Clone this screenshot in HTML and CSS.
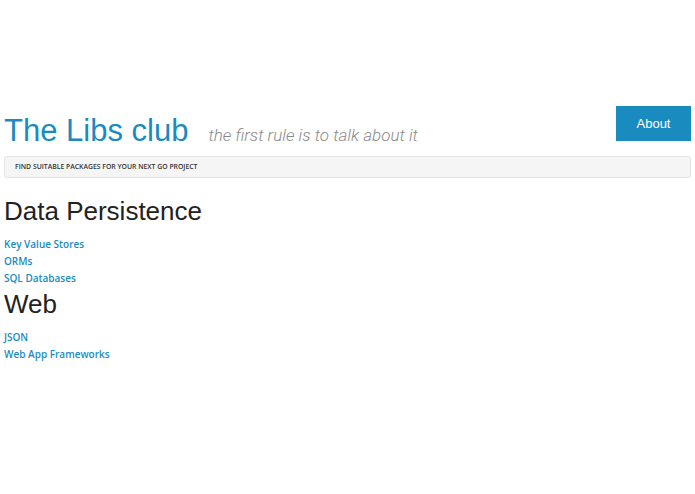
FILE: index.html
```html
<!DOCTYPE html>
<html>
<head>
<meta charset="utf-8">
<link rel="stylesheet" href="styles.css">
</head>
<body>
<div class="page">
  <header class="header">
    <div class="brand">
      <h1 class="title">The Libs club</h1>
      <span class="tagline">the first rule is to talk about it</span>
    </div>
    <a class="about" href="#">About</a>
  </header>
  <div class="bar">FIND SUITABLE PACKAGES FOR YOUR NEXT GO PROJECT</div>
  <section class="group">
    <h2 class="heading">Data Persistence</h2>
    <ul class="links">
      <li><a href="#">Key Value Stores</a></li>
      <li><a href="#">ORMs</a></li>
      <li><a href="#">SQL Databases</a></li>
    </ul>
  </section>
  <section class="group second">
    <h2 class="heading">Web</h2>
    <ul class="links">
      <li><a href="#">JSON</a></li>
      <li><a href="#">Web App Frameworks</a></li>
    </ul>
  </section>
</div>
</body>
</html>
```
FILE: styles.css
```css
html, body { margin: 0; padding: 0; background: #fff; }
body { font-family: "Liberation Sans", Arial, sans-serif; color: #222; }
.page { padding: 106px 4px 0 4px; }
.header { display: flex; justify-content: space-between; align-items: flex-start; }
.brand { display: flex; align-items: baseline; padding-top: 7px; }
.title { margin: 0; font-weight: normal; font-size: 31px; line-height: 36px; color: #1a8bbf; }
.tagline { margin-left: 20px; font-family: Roboto, sans-serif; font-size: 17px; font-style: italic; color: #8a8a8a; font-weight: 300; }
.about { display: block; width: 75px; height: 35px; line-height: 35px; text-align: center; background: #1a8bbf; color: #fff; text-decoration: none; font-size: 13px; }
.bar { margin-top: 7px; height: 20px; line-height: 20px; padding: 0 10px; background: #f5f5f5; border: 1px solid #e3e3e3; border-radius: 3px; font-family: "Open Sans", sans-serif; font-size: 6.85px; font-weight: 600; color: #333; }
.heading { margin: 0; font-weight: normal; font-size: 26px; line-height: 30px; color: #222; }
.group:first-of-type .heading { margin-top: 18px; }
.second .heading { margin-top: 3px; }
.links { list-style: none; margin: 10px 0 0 0; padding: 0; }
.links li { font-family: "Open Sans", sans-serif; font-size: 10px; font-weight: 600; line-height: 16.8px; }
.links a { color: #1a8bbf; text-decoration: none; }
```
